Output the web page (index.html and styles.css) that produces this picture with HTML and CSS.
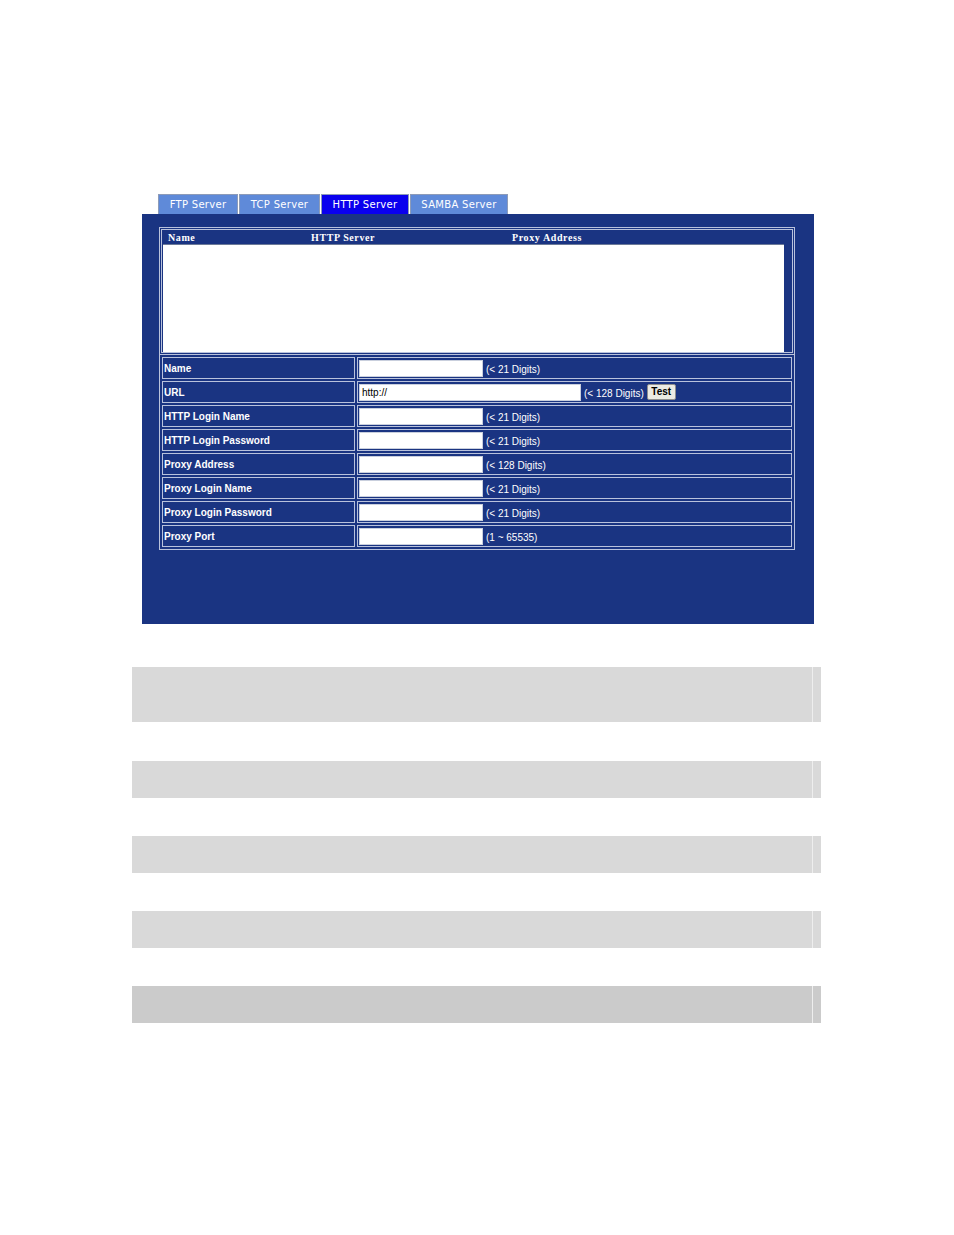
FILE: index.html
```html
<!DOCTYPE html>
<html>
<head>
<meta charset="utf-8">
<title>HTTP Server</title>
<link rel="stylesheet" href="styles.css">
</head>
<body>
<div class="page">
  <div class="tabs">
    <div class="tab t-ftp">FTP Server</div>
    <div class="tab t-tcp">TCP Server</div>
    <div class="tab t-http active">HTTP Server</div>
    <div class="tab t-samba">SAMBA Server</div>
  </div>
  <div class="panel">
    <table class="list">
      <tr>
        <td class="list-cell">
          <div class="list-head">
            <span class="h-name">Name</span>
            <span class="h-server">HTTP Server</span>
            <span class="h-proxy">Proxy Address</span>
          </div>
          <div class="list-box"></div>
        </td>
      </tr>
    </table>
    <table class="form">
      <tr><td class="lbl">Name</td><td class="val"><span class="inp"></span><span class="hint">(&lt; 21 Digits)</span></td></tr>
      <tr><td class="lbl">URL</td><td class="val"><span class="inp wide">http://</span><span class="hint">(&lt; 128 Digits)</span><span class="btn">Test</span></td></tr>
      <tr><td class="lbl">HTTP Login Name</td><td class="val"><span class="inp"></span><span class="hint">(&lt; 21 Digits)</span></td></tr>
      <tr><td class="lbl">HTTP Login Password</td><td class="val"><span class="inp"></span><span class="hint">(&lt; 21 Digits)</span></td></tr>
      <tr><td class="lbl">Proxy Address</td><td class="val"><span class="inp"></span><span class="hint">(&lt; 128 Digits)</span></td></tr>
      <tr><td class="lbl">Proxy Login Name</td><td class="val"><span class="inp"></span><span class="hint">(&lt; 21 Digits)</span></td></tr>
      <tr><td class="lbl">Proxy Login Password</td><td class="val"><span class="inp"></span><span class="hint">(&lt; 21 Digits)</span></td></tr>
      <tr><td class="lbl">Proxy Port</td><td class="val"><span class="inp"></span><span class="hint">(1 ~ 65535)</span></td></tr>
    </table>
  </div>
  <div class="bars">
    <div class="bar b-tall"><div class="bar-main"></div><div class="bar-end"></div></div>
    <div class="bar"><div class="bar-main"></div><div class="bar-end"></div></div>
    <div class="bar"><div class="bar-main"></div><div class="bar-end"></div></div>
    <div class="bar"><div class="bar-main"></div><div class="bar-end"></div></div>
    <div class="bar dark"><div class="bar-main"></div><div class="bar-end"></div></div>
  </div>
</div>
</body>
</html>
```
FILE: styles.css
```css
html, body {
  margin: 0;
  padding: 0;
  background: #ffffff;
}
.page {
  width: 954px;
  height: 1235px;
  padding-top: 194px;
  box-sizing: border-box;
  font-family: "Liberation Sans", Arial, sans-serif;
}
.tabs {
  display: flex;
  margin-left: 158px;
  height: 20px;
}
.tab {
  box-sizing: border-box;
  height: 20px;
  border: 1px solid #8d9bb8;
  border-bottom: none;
  background: #5f8ad9;
  color: #ffffff;
  font-family: "DejaVu Sans", Verdana, sans-serif;
  font-size: 10px;
  letter-spacing: 0.3px;
  line-height: 19px;
  text-align: center;
  margin-right: 1px;
}
.t-ftp { width: 80px; }
.t-tcp { width: 81px; }
.t-http { width: 88px; }
.t-samba { width: 98px; }
.tab.active {
  background: #0a00ee;
}
.panel {
  margin-left: 142px;
  width: 672px;
  height: 410px;
  box-sizing: border-box;
  background: #1a3482;
  padding: 13px 19px 0 17px;
}
.list {
  width: 636px;
  border: 1px solid #b9c2dc;
  border-spacing: 1px;
}
.list-cell {
  border: 1px solid #b9c2dc;
  padding: 0;
  height: 121px;
  vertical-align: top;
}
.list-head {
  position: relative;
  height: 14px;
  color: #ffffff;
  font-family: "Liberation Serif", "Times New Roman", serif;
  font-weight: bold;
  font-size: 10px;
  line-height: 16px;
  letter-spacing: 0.6px;
}
.list-head span {
  position: absolute;
  top: 0;
}
.h-name { left: 6px; }
.h-server { left: 149px; }
.h-proxy { left: 350px; }
.list-box {
  margin-left: 1px;
  width: 621px;
  height: 107px;
  background: #ffffff;
  border-top: 1px solid #6c7a98;
}
.form {
  width: 636px;
  border: 1px solid #b9c2dc;
  border-spacing: 2px 2px;
  margin-top: -1px;
}
.form td {
  border: 1px solid #b9c2dc;
  height: 20px;
  padding: 0;
  vertical-align: middle;
  color: #ffffff;
}
.lbl {
  width: 190px;
  font-size: 10px;
  font-weight: bold;
  padding-left: 1px !important;
}
.val {
  font-size: 0;
  white-space: nowrap;
}
.inp {
  display: inline-block;
  vertical-align: middle;
  box-sizing: border-box;
  width: 124px;
  height: 17px;
  margin-left: 1px;
  background: #ffffff;
  border: 1px solid #c9cfdd;
  color: #000000;
  font-size: 10px;
  line-height: 15px;
  padding-left: 2px;
}
.inp.wide {
  width: 222px;
}
.hint {
  display: inline-block;
  vertical-align: middle;
  font-size: 10px;
  margin-left: 3px;
  padding-top: 2px;
}
.btn {
  display: inline-block;
  vertical-align: middle;
  box-sizing: border-box;
  width: 29px;
  height: 16px;
  margin-left: 3px;
  background: #ecebe4;
  border: 1px solid #8f8f8f;
  border-radius: 2px;
  color: #000000;
  font-size: 10px;
  font-weight: bold;
  text-align: center;
  line-height: 13px;
}
.bars {
  margin-top: 43px;
  margin-left: 132px;
  width: 689px;
}
.bar {
  display: flex;
  height: 37px;
  margin-bottom: 38px;
  background: #d9d9d9;
}
.bar.b-tall {
  height: 55px;
  margin-bottom: 39px;
}
.bar.dark {
  background: #cbcbcb;
}
.bar-main {
  flex: 1;
}
.bar-end {
  width: 8px;
  border-left: 1px solid #eeeeee;
}
```
